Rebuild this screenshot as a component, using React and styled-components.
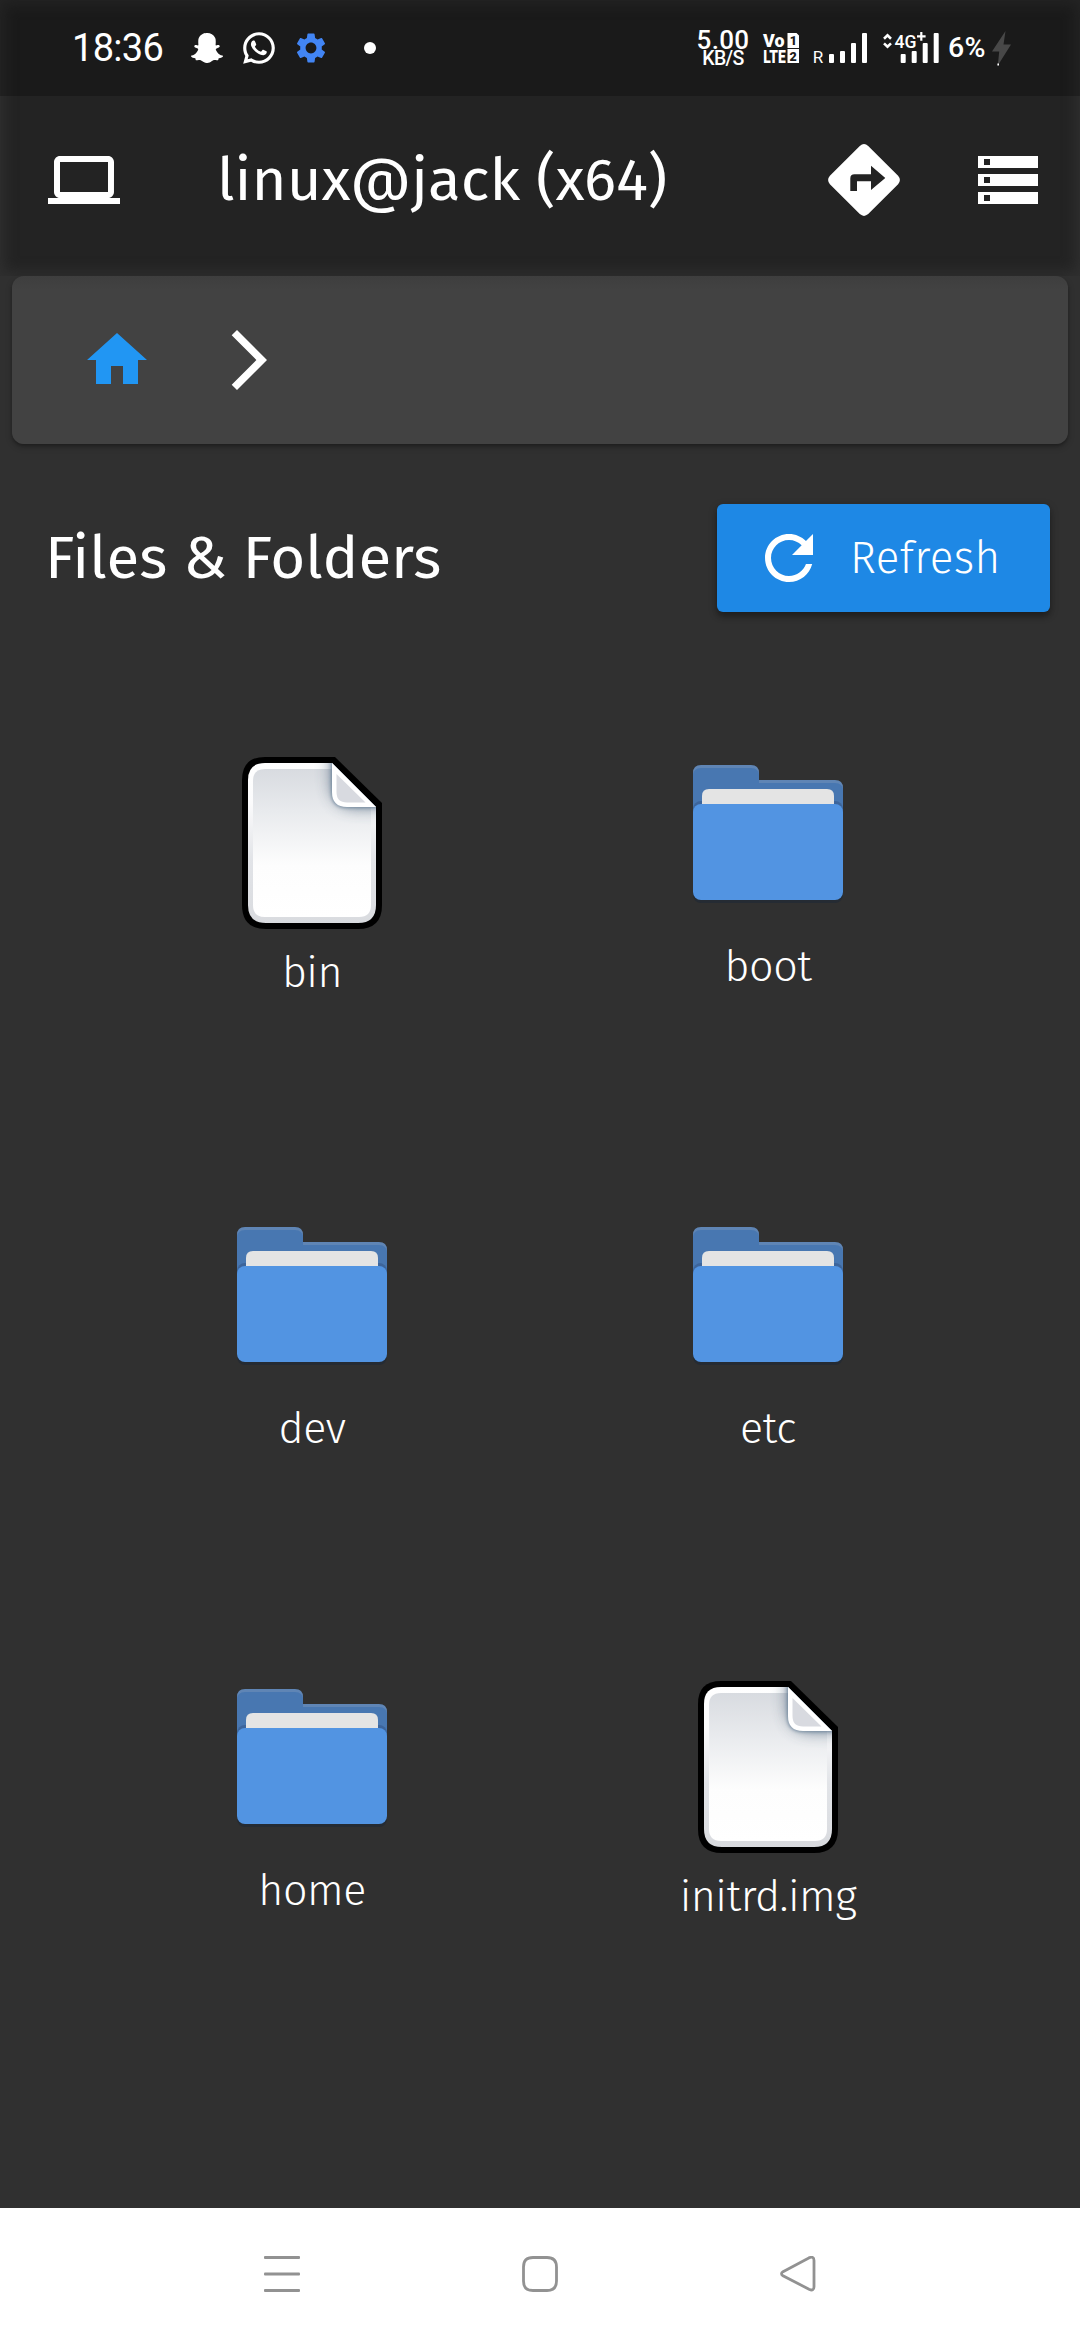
import React from "react";
import styled, { createGlobalStyle } from "styled-components";
import { FaSnapchatGhost } from "react-icons/fa";
import { RiWhatsappLine } from "react-icons/ri";
import { MdSettings } from "react-icons/md";

const GlobalStyle = createGlobalStyle`
  html, body {
    margin: 0;
    padding: 0;
    background: #303030;
  }
  * { box-sizing: border-box; }
  svg { display: block; flex: none; }
`;

const uiFont = `"Fira Sans", "Noto Sans CJK SC", "Noto Sans", sans-serif`;
const systemFont = `Roboto, "Noto Sans", sans-serif`;

const Screen = styled.div`
  width: 1080px;
  height: 2340px;
  display: flex;
  flex-direction: column;
  overflow: hidden;
  background: #303030;
  color: #fff;
  font-family: ${uiFont};
`;

const Header = styled.header`
  height: 276px;
  flex: none;
  background: #232323;
  box-shadow: inset 0 0 14px 4px #303030;
`;

const StatusBar = styled.div`
  height: 96px;
  display: flex;
  align-items: flex-start;
  padding: 0 69px 0 72px;
  background: rgba(0, 0, 0, 0.24);
  font-family: ${systemFont};
`;

const Clock = styled.span`
  width: 119px;
  margin-top: 26px;
  font-size: 38px;
  line-height: 44px;
  letter-spacing: -0.7px;
  white-space: nowrap;
`;

const StatusIcon = styled.span`
  display: flex;
  margin-top: ${(p) => p.$top}px;
  margin-right: ${(p) => p.$gap}px;
  color: ${(p) => p.$color || "#fff"};
`;

const Dot = styled.span`
  width: 12px;
  height: 12px;
  margin-top: 42px;
  border-radius: 50%;
  background: #fff;
`;

const NetSpeed = styled.div`
  width: 54px;
  margin: 29px 13px 0 auto;
  display: flex;
  flex-direction: column;
  align-items: center;
  font-weight: 500;
  white-space: nowrap;
`;

const SpeedValue = styled.span`
  font-size: 26px;
  line-height: 22px;
  letter-spacing: 0.3px;
`;

const SpeedUnit = styled.span`
  font-size: 19.5px;
  line-height: 16px;
  letter-spacing: -0.6px;
`;

const Battery = styled.span`
  width: 44px;
  margin-top: 31px;
  font-size: 28.5px;
  line-height: 33px;
  font-weight: 500;
  letter-spacing: 0.2px;
  white-space: nowrap;
`;

const Toolbar = styled.div`
  height: 168px;
  display: flex;
  align-items: center;
  padding: 0 36px 0 48px;
`;

const Title = styled.h1`
  flex: 1;
  margin: 0 0 0 97px;
  font-size: 60px;
  line-height: 80px;
  font-weight: 400;
  white-space: nowrap;
`;

const ToolbarActions = styled.div`
  display: flex;
  gap: 72px;
`;

const Breadcrumbs = styled.nav`
  height: 168px;
  flex: none;
  margin: 0 12px;
  padding-left: 69px;
  display: flex;
  align-items: center;
  gap: 60px;
  border-radius: 12px;
  background: linear-gradient(#3e3e3e, #424242 14px);
  box-shadow: 0 3px 6px rgba(0, 0, 0, 0.28), 0 2px 2px rgba(0, 0, 0, 0.14);
`;

const SectionHeader = styled.div`
  height: 108px;
  flex: none;
  margin: 60px 30px 0 45px;
  display: flex;
  align-items: center;
  justify-content: space-between;
`;

const SectionTitle = styled.h2`
  margin: 0;
  font-size: 60px;
  line-height: 80px;
  font-weight: 400;
  white-space: nowrap;
`;

const RefreshButton = styled.button`
  width: 333px;
  height: 108px;
  padding: 0 0 0 36px;
  border: 0;
  border-radius: 6px;
  display: flex;
  align-items: center;
  gap: 25px;
  background: #1e88e5;
  color: #fff;
  font-family: ${uiFont};
  font-size: 44px;
  font-weight: 300;
  letter-spacing: 0.4px;
  box-shadow: 0 3px 9px rgba(0, 0, 0, 0.3), 0 5px 5px rgba(0, 0, 0, 0.16);
`;

const FileGrid = styled.main`
  flex: 1;
  display: grid;
  grid-template-columns: 456px 456px;
  grid-auto-rows: 462px;
  align-content: start;
  padding: 145px 84px 0;
`;

const Entry = styled.div`
  display: flex;
  flex-direction: column;
  align-items: center;
  padding-top: ${(p) => (p.$kind === "folder" ? 8 : 0)}px;
`;

const EntryName = styled.span`
  margin-top: ${(p) => (p.$kind === "folder" ? 33 : 14)}px;
  font-size: 43px;
  line-height: 60px;
  font-weight: 300;
  letter-spacing: -0.5px;
  white-space: nowrap;
`;

const NavBar = styled.footer`
  height: 132px;
  flex: none;
  display: flex;
  justify-content: center;
  align-items: center;
  gap: 222px;
  background: #fff;
`;

function Glyph({ d, color = "#fff" }) {
  return (
    <svg width="72" height="72" viewBox="0 0 24 24" fill={color}>
      <path d={d} />
    </svg>
  );
}

const paths = {
  laptop:
    "M20 18c1.1 0 1.99-.9 1.99-2L22 6c0-1.1-.9-2-2-2H4c-1.1 0-2 .9-2 2v10c0 1.1.9 2 2 2H0v2h24v-2h-4zM4 6h16v10H4V6z",
  storage:
    "M2 20h20v-4H2v4zm2-3h2v2H4v-2zM2 4v4h20V4H2zm4 3H4V5h2v2zm-4 7h20v-4H2v4zm2-3h2v2H4v-2z",
  home: "M10 20v-6h4v6h5v-8h3L12 3 2 12h3v8z",
  chevron: "M6.23 20.23L8 22l10-10L8 2 6.23 3.77 14.46 12z",
  refresh:
    "M17.65 6.35C16.2 4.9 14.21 4 12 4c-4.42 0-7.99 3.58-7.99 8s3.57 8 7.99 8c3.73 0 6.84-2.55 7.73-6h-2.08c-.82 2.33-3.04 4-5.65 4-3.31 0-6-2.69-6-6s2.69-6 6-6c1.66 0 3.14.69 4.22 1.78L13 11h7V4l-2.35 2.35z",
};

function Directions() {
  return (
    <svg width="72" height="72" viewBox="0 0 72 72" fill="#fff">
      <path
        fillRule="evenodd"
        d="M31.8 1.9Q36 -1.7 40.2 1.9L70.1 31.8Q73.7 36 70.1 40.2L40.2 70.1Q36 73.7 31.8 70.1L1.9 40.2Q-1.7 36 1.9 31.8ZM22.3 47H29V37.2H43V46L57.3 34L43 21.8V30.2H26.5Q22.3 30.2 22.3 34.4Z"
      />
    </svg>
  );
}

function VoLte() {
  return (
    <svg width="36" height="32" viewBox="0 0 36 32" fill="#fff" overflow="visible">
      <g fontFamily="Roboto, sans-serif" fontWeight="900" fontSize="18.5">
        <text x="0" y="15" textLength="21.5" lengthAdjust="spacingAndGlyphs">Vo</text>
        <text x="0.2" y="30.6" textLength="22.5" lengthAdjust="spacingAndGlyphs">LTE</text>
      </g>
      <path d="M24.5 1h9l2.5 2.5v12.5h-11.5zM24.5 17h11.5v14h-11.5z" />
      <g fontFamily="Roboto, sans-serif" fontWeight="900" fontSize="12.5" fill="#1b1b1b">
        <text x="26.8" y="13">1</text>
        <text x="26.6" y="28.6">2</text>
      </g>
    </svg>
  );
}

function Bars({ x }) {
  return (
    <g>
      <rect x={x} y="23" width="5" height="9" rx="1" />
      <rect x={x + 11} y="20" width="5" height="12" rx="1" />
      <rect x={x + 22} y="12" width="5" height="20" rx="1" />
      <rect x={x + 33} y="2" width="5" height="30" rx="1" />
    </g>
  );
}

function RoamingSignal() {
  return (
    <svg width="56" height="34" viewBox="0 0 56 34" fill="#fff" overflow="visible">
      <text x="-0.2" y="32.4" fontFamily="Roboto, sans-serif" fontSize="16.5" textLength="10.5" lengthAdjust="spacingAndGlyphs">R</text>
      <Bars x={16} />
    </svg>
  );
}

function DataSignal() {
  return (
    <svg width="58" height="34" viewBox="0 0 58 34" fill="#fff">
      <path d="M2 7.8L5.5 4.4L9 7.8M2 12.4L5.5 15.8L9 12.4" fill="none" stroke="#fff" strokeWidth="2.6" />
      <text x="12.4" y="16.5" fontFamily="Roboto, sans-serif" fontSize="18.5" fontWeight="500" textLength="22" lengthAdjust="spacingAndGlyphs">4G</text>
      <path d="M35 4.3h3.2V1h2.2V4.3h3.2v2.2h-3.2v3.2h-2.2V6.5H35z" />
      <Bars x={18.7} />
    </svg>
  );
}

function Bolt() {
  return (
    <svg width="19" height="36" viewBox="0 0 19 36">
      <path d="M13.5 0L0 20.5H7.2L5.8 34.5L19 13.5H11.5Z" fill="#484848" />
      <rect x="5.4" y="32.5" width="1.6" height="2" fill="#fff" />
    </svg>
  );
}

function FolderIcon() {
  return (
    <svg width="150" height="139" viewBox="0 0 150 139">
      <rect y="42" width="150" height="96" rx="8" fill="#252b33" />
      <path d="M8 0H58Q66 0 66 8V15H142Q150 15 150 23V60H0V8Q0 0 8 0Z" fill="#5f85b5" />
      <path d="M8 3H58Q66 3 66 11V18H142Q150 18 150 26V60H0V11Q0 3 8 3Z" fill="#4877b1" />
      <rect y="36" width="150" height="40" rx="8" fill="#3d659b" />
      <path d="M16 24H134Q141 24 141 31V50H9V31Q9 24 16 24Z" fill="#e4e4e4" />
      <rect y="39" width="150" height="96" rx="8" fill="#5294e2" />
    </svg>
  );
}

function FileIcon({ id }) {
  const page =
    "M23 6H90L134 50V148Q134 166 116 166H24Q6 166 6 148V23Q6 6 23 6Z";
  return (
    <svg width="140" height="172" viewBox="0 0 140 172">
      <defs>
        <linearGradient id={`${id}-edge`} x1="0" y1="0" x2="0" y2="1">
          <stop offset="0" stopColor="#fff" />
          <stop offset="0.25" stopColor="#fbfbfc" />
          <stop offset="0.6" stopColor="#e2e4e8" />
          <stop offset="1" stopColor="#d9dbdf" />
        </linearGradient>
        <linearGradient id={`${id}-paper`} x1="0" y1="0" x2="0" y2="1">
          <stop offset="0" stopColor="#d8dbe0" />
          <stop offset="0.28" stopColor="#e8eaed" />
          <stop offset="0.65" stopColor="#fdfdfd" />
          <stop offset="1" stopColor="#fff" />
        </linearGradient>
        <clipPath id={`${id}-clip`}>
          <path d={page} />
        </clipPath>
        <filter id={`${id}-soft`} x="-60%" y="-60%" width="220%" height="220%">
          <feGaussianBlur stdDeviation="8" />
        </filter>
        <filter id={`${id}-tight`} x="-30%" y="-30%" width="160%" height="160%">
          <feGaussianBlur stdDeviation="1.6" />
        </filter>
      </defs>
      <path d="M23 0H93L140 46V148Q140 172 116 172H24Q0 172 0 148V23Q0 0 23 0Z" fill="#000" />
      <path d={page} fill={`url(#${id}-edge)`} />
      <g clipPath={`url(#${id}-clip)`}>
        <path d="M23 12H92L129 50V148Q129 160 117 160H23Q11 160 11 148V24Q11 12 23 12Z" fill={`url(#${id}-paper)`} />
        <path d="M90 -20V28Q92 48 112 50H160V-20Z" fill="#4f667d" opacity="0.85" filter={`url(#${id}-soft)`} />
        <path d="M90 6V35Q90 50 105 50H134Z" fill="#5d7891" stroke="#5d7891" strokeWidth="2.5" opacity="0.6" filter={`url(#${id}-tight)`} />
      </g>
      <path d="M90 6V35Q90 50 105 50H134Z" fill="#fff" />
      <path d="M94.5 17V35Q94.5 45.5 105 45.5H123.5Z" fill="#d8dae0" />
    </svg>
  );
}

function RecentsIcon() {
  return (
    <svg width="36" height="36" viewBox="0 0 36 36" fill="#929292">
      <rect width="36" height="3" rx="1" />
      <rect y="16.5" width="36" height="3" rx="1" />
      <rect y="33" width="36" height="3" rx="1" />
    </svg>
  );
}

function HomeButtonIcon() {
  return (
    <svg width="36" height="36" viewBox="0 0 36 36" fill="none" stroke="#929292" strokeWidth="2.8">
      <path d="M11 1.5H25Q34.5 1.5 34.5 11V25Q34.5 34.5 25 34.5H11Q1.5 34.5 1.5 25V11Q1.5 1.5 11 1.5Z" />
    </svg>
  );
}

function BackIcon() {
  return (
    <svg width="36" height="36" viewBox="0 0 36 36" fill="none" stroke="#929292" strokeWidth="2.8">
      <path d="M3 15.7L28.8 1.9Q34 -0.3 34 4.5V30.8Q34 35.6 29 33.2L3 19.8Q0 17.7 3 15.7Z" />
    </svg>
  );
}

const entries = [
  { name: "bin", kind: "file" },
  { name: "boot", kind: "folder" },
  { name: "dev", kind: "folder" },
  { name: "etc", kind: "folder" },
  { name: "home", kind: "folder" },
  { name: "initrd.img", kind: "file" },
];

export default function App() {
  return (
    <Screen>
      <GlobalStyle />
      <Header>
        <StatusBar>
          <Clock>18:36</Clock>
          <StatusIcon $top={32} $gap={17}>
            <FaSnapchatGhost size={32} />
          </StatusIcon>
          <StatusIcon $top={29} $gap={15}>
            <RiWhatsappLine size={38} />
          </StatusIcon>
          <StatusIcon $top={30} $gap={35} $color="#4285f4">
            <MdSettings size={36} />
          </StatusIcon>
          <Dot />
          <NetSpeed>
            <SpeedValue>5.00</SpeedValue>
            <SpeedUnit>KB/S</SpeedUnit>
          </NetSpeed>
          <StatusIcon $top={32} $gap={14}>
            <VoLte />
          </StatusIcon>
          <StatusIcon $top={31} $gap={13}>
            <RoamingSignal />
          </StatusIcon>
          <StatusIcon $top={31} $gap={8}>
            <DataSignal />
          </StatusIcon>
          <Battery>6%</Battery>
          <StatusIcon $top={31} $gap={0}>
            <Bolt />
          </StatusIcon>
        </StatusBar>
        <Toolbar>
          <Glyph d={paths.laptop} />
          <Title>linux@jack (x64)</Title>
          <ToolbarActions>
            <Directions />
            <Glyph d={paths.storage} />
          </ToolbarActions>
        </Toolbar>
      </Header>
      <Breadcrumbs>
        <Glyph d={paths.home} color="#2196f3" />
        <Glyph d={paths.chevron} />
      </Breadcrumbs>
      <SectionHeader>
        <SectionTitle>Files &amp; Folders</SectionTitle>
        <RefreshButton>
          <Glyph d={paths.refresh} />
          Refresh
        </RefreshButton>
      </SectionHeader>
      <FileGrid>
        {entries.map(({ name, kind }) => (
          <Entry key={name} $kind={kind}>
            {kind === "folder" ? <FolderIcon /> : <FileIcon id={`file-${name.slice(0, 3)}`} />}
            <EntryName $kind={kind}>{name}</EntryName>
          </Entry>
        ))}
      </FileGrid>
      <NavBar>
        <RecentsIcon />
        <HomeButtonIcon />
        <BackIcon />
      </NavBar>
    </Screen>
  );
}
